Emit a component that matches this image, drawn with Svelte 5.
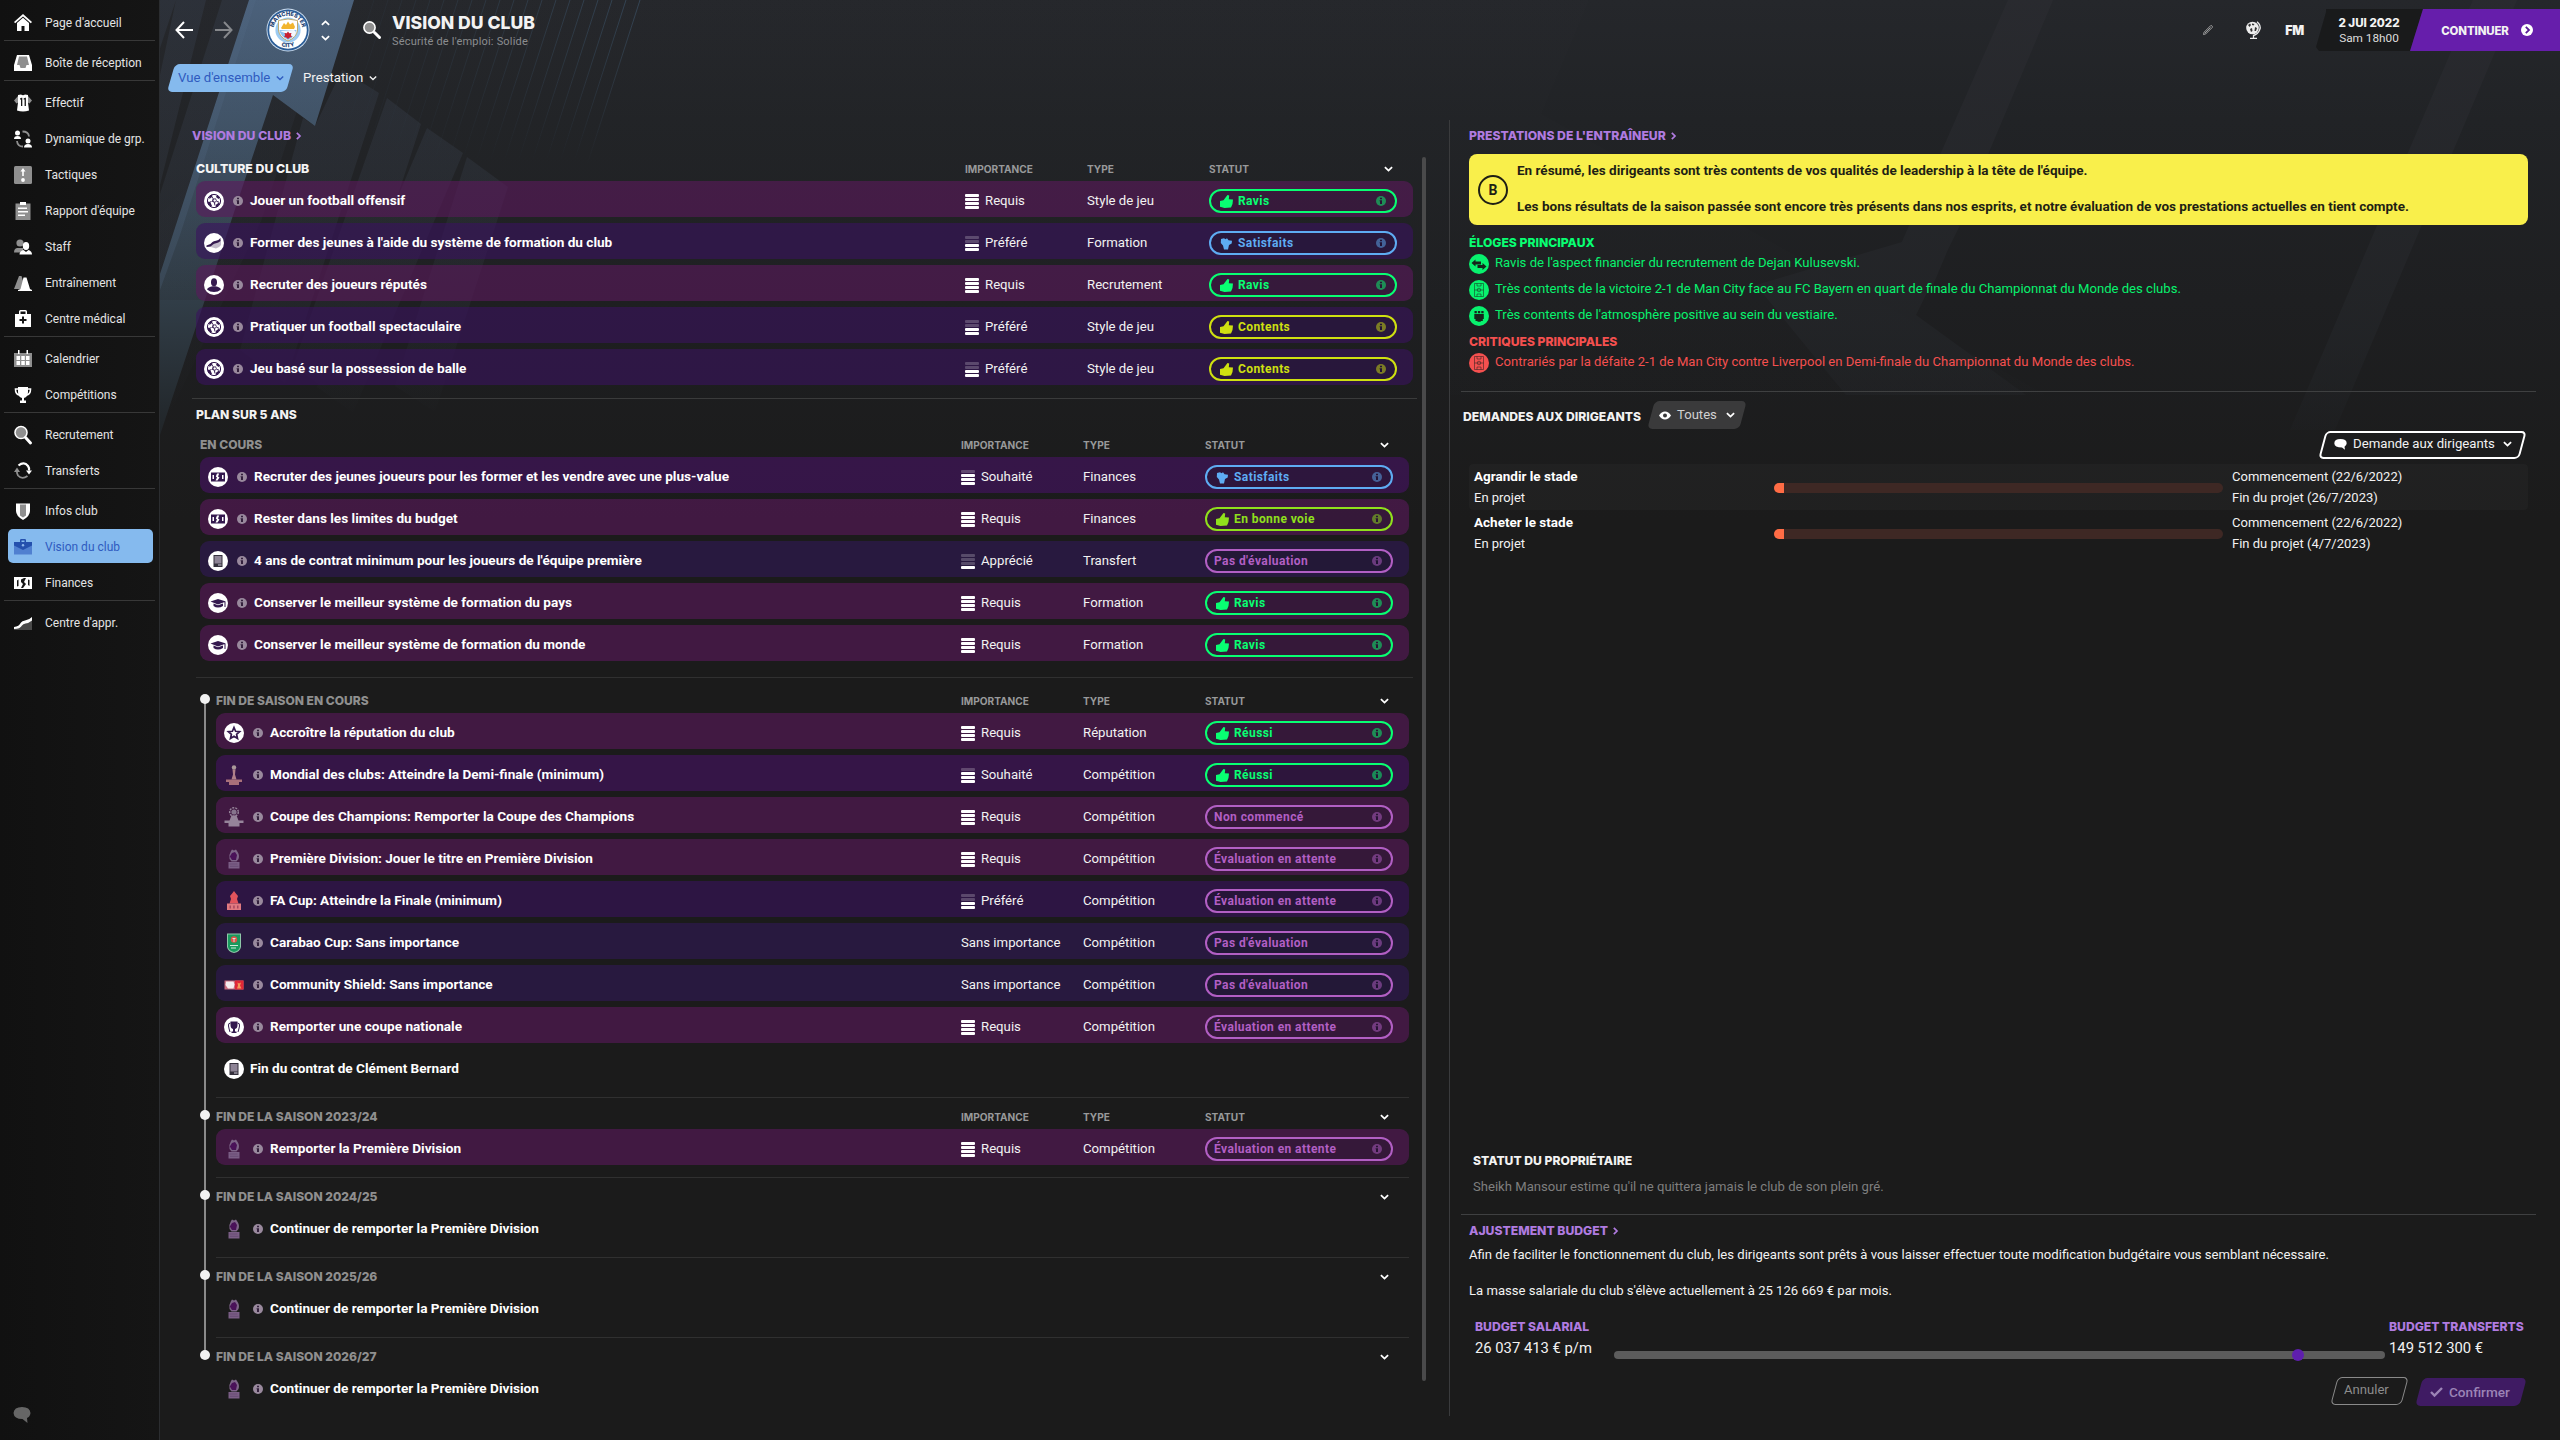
<script>
  const nav = [
    [['home', "Page d'accueil"]],
    [['inbox', 'Boîte de réception']],
    [
      ['shirt', 'Effectif'], ['dynamics', 'Dynamique de grp.'], ['tactics', 'Tactiques'], ['report', "Rapport d'équipe"],
      ['staff', 'Staff'], ['cones', 'Entraînement'], ['medical', 'Centre médical']
    ],
    [['calendar', 'Calendrier'], ['trophy', 'Compétitions']],
    [['search', 'Recrutement'], ['transfer', 'Transferts']],
    [['shield', 'Infos club'], ['case', 'Vision du club', true], ['money', 'Finances']],
    [['growth', "Centre d'appr."]]
  ];

  const levels = { 'Requis': 4, 'Souhaité': 3, 'Préféré': 2, 'Apprécié': 1, 'Sans importance': 0 };
  const tones = {
    'Ravis': ['green', 'up'], 'Réussi': ['green', 'up'], 'Satisfaits': ['blue', 'side'],
    'Contents': ['lemon', 'up'], 'En bonne voie': ['lime', 'up']
  };
  const culture = [
    ['ball', 'Jouer un football offensif', 'Requis', 'Style de jeu', 'Ravis'],
    ['curve', "Former des jeunes à l'aide du système de formation du club", 'Préféré', 'Formation', 'Satisfaits'],
    ['person', 'Recruter des joueurs réputés', 'Requis', 'Recrutement', 'Ravis'],
    ['ball', 'Pratiquer un football spectaculaire', 'Préféré', 'Style de jeu', 'Contents'],
    ['ball', 'Jeu basé sur la possession de balle', 'Préféré', 'Style de jeu', 'Contents']
  ];
  const current = [
    ['cash', 'Recruter des jeunes joueurs pour les former et les vendre avec une plus-value', 'Souhaité', 'Finances', 'Satisfaits'],
    ['cash', 'Rester dans les limites du budget', 'Requis', 'Finances', 'En bonne voie'],
    ['contract', "4 ans de contrat minimum pour les joueurs de l'équipe première", 'Apprécié', 'Transfert', "Pas d'évaluation"],
    ['grad', 'Conserver le meilleur système de formation du pays', 'Requis', 'Formation', 'Ravis'],
    ['grad', 'Conserver le meilleur système de formation du monde', 'Requis', 'Formation', 'Ravis']
  ];
  const seasons = [
    {
      title: 'FIN DE SAISON EN COURS', cols: true, rows: [
        ['star', 'Accroître la réputation du club', 'Requis', 'Réputation', 'Réussi'],
        ['worldcup', 'Mondial des clubs: Atteindre la Demi-finale (minimum)', 'Souhaité', 'Compétition', 'Réussi'],
        ['champions', 'Coupe des Champions: Remporter la Coupe des Champions', 'Requis', 'Compétition', 'Non commencé'],
        ['league', 'Première Division: Jouer le titre en Première Division', 'Requis', 'Compétition', 'Évaluation en attente'],
        ['facup', 'FA Cup: Atteindre la Finale (minimum)', 'Préféré', 'Compétition', 'Évaluation en attente'],
        ['carabao', 'Carabao Cup: Sans importance', 'Sans importance', 'Compétition', "Pas d'évaluation"],
        ['community', 'Community Shield: Sans importance', 'Sans importance', 'Compétition', "Pas d'évaluation"],
        ['cup', 'Remporter une coupe nationale', 'Requis', 'Compétition', 'Évaluation en attente'],
        ['contract', 'Fin du contrat de Clément Bernard']
      ]
    },
    { title: 'FIN DE LA SAISON 2023/24', cols: true, rows: [['league', 'Remporter la Première Division', 'Requis', 'Compétition', 'Évaluation en attente']] },
    { title: 'FIN DE LA SAISON 2024/25', rows: [['league', 'Continuer de remporter la Première Division']] },
    { title: 'FIN DE LA SAISON 2025/26', rows: [['league', 'Continuer de remporter la Première Division']] },
    { title: 'FIN DE LA SAISON 2026/27', rows: [['league', 'Continuer de remporter la Première Division']] }
  ];
  const praise = [
    ['swap', "Ravis de l'aspect financier du recrutement de Dejan Kulusevski."],
    ['pitch', 'Très contents de la victoire 2-1 de Man City face au FC Bayern en quart de finale du Championnat du Monde des clubs.'],
    ['people', "Très contents de l'atmosphère positive au sein du vestiaire."]
  ];
  const critics = [['pitch', 'Contrariés par la défaite 2-1 de Man City contre Liverpool en Demi-finale du Championnat du Monde des clubs.']];
  const projects = [
    ['Agrandir le stade', '26/7/2023'],
    ['Acheter le stade', '4/7/2023']
  ];
  const budget = 88.7;
  const rays = Array.from({ length: 20 }, (_, i) => 374 + i * 14);
</script>

{#snippet chev(cls)}
  <svg class="chev {cls}" viewBox="0 0 10 6"><path d="M1 1l4 3.8L9 1" /></svg>
{/snippet}

{#snippet info()}
  <svg class="info" viewBox="0 0 10 10"><circle cx="5" cy="5" r="5" /><path d="M4 1.8h2v1.5H4zM3.6 4.2H6V8H4V5.2h-.4z" /></svg>
{/snippet}

{#snippet navIcon(k)}
  <svg class="nav-icon" viewBox="0 0 18 18">
    {#if k === 'home'}
      <path class="w" d="M9 0l9 8-1.2 1.3L9 2.4 1.2 9.3 0 8zM3 9l6-5.3L15 9v8h-4.5v-5h-3v5H3z" />
    {:else if k === 'inbox'}
      <path class="w" d="M3 1h12l3 10v6H0v-6z" /><path class="g" d="M5 2.6h8l2 8.4h-2.500l-1 3H6.500l-1-3H3z" />
    {:else if k === 'shirt'}
      <path class="g" d="M4 2L0 6.500l2.500 3L5 8zM14 2l4 4.500-2.500 3L13 8z" /><path class="w" d="M4 1l3-.5q2 1.500 4 0l3 .5v7.500l1 8q-6 2-12 0l1-8z" />
      <path class="k" d="M6 4.500l1.500-.7h.8V12H7V5.500H6zM9.600 4.500l1.500-.7h.8V12h-1.300V5.500h-1z" />
    {:else if k === 'dynamics'}
      <circle class="w" cx="3.500" cy="3" r="2.500" /><path class="w" d="M0 9q0-3 3.500-3T7 9z" />
      <circle class="w" cx="14" cy="11" r="2.500" /><path class="w" d="M10 17.500q0-3.500 4-3.500t4 3.500z" />
      <path class="gs" d="M8.500 1.500q6 0 6.500 5M9 16.500q-5.500 0-6-5.500" />
    {:else if k === 'tactics'}
      <rect class="g" width="18" height="18" rx="1.500" /><path class="w" d="M9 2l2.500 3.500h-1.700V10H8.200V5.500H6.500z" /><circle class="w" cx="9" cy="14" r="1.900" />
    {:else if k === 'report'}
      <path class="g" d="M1.500 1.500h15V18h-15z" /><path class="w" d="M6 0h6v3H6zM4 5.500h9V7H4zM4 9h10v1.500H4zM4 12.500h7V14H4z" />
    {:else if k === 'staff'}
      <g class="g"><circle cx="6" cy="5" r="3.600" /><path d="M0 14.500q0-4 3-4.500h6v4.500z" /></g>
      <g class="w"><ellipse cx="12" cy="8" rx="3.200" ry="4" /><path d="M5.500 16.500q0-3.500 4-4.500l2.500 2 2.500-2q3.500 1 3.500 4.500z" /></g>
    {:else if k === 'cones'}
      <path class="g" d="M5 2h2.500L11 13v2H0z" /><path class="w" d="M9.500 3.500h3L16 15l2 1v1H4v-1l2.500-1z" />
    {:else if k === 'medical'}
      <path class="w" fill-rule="evenodd" d="M5 4V1.500Q5 0 6.500 0h5Q13 0 13 1.500V4h4v13H1V4zM6.500 4h5V1.600h-5z" /><path class="k" d="M8 6.500h2V9h2.500v2H10v2.500H8V11H5.500V9H8z" />
    {:else if k === 'calendar'}
      <path class="g" d="M0 3h18v14H0z" /><path class="w" d="M4 0h1.500v4H4zM12.500 0H14v4h-1.500zM2.500 6h3.500v4H2.500zM7.300 6h3.500v4H7.300zM12 6h3.500v4H12zM2.500 11h3.500v4H2.500zM7.300 11h3.500v4H7.300zM12 11h3.500v4H12z" />
    {:else if k === 'trophy'}
      <path class="w" d="M4 1h10v5q0 5-4 6v2.500h2V17H6v-2.500h2V12Q4 11 4 6z" /><path class="ws" d="M4 3H1.500q0 5 3.500 6M14 3h2.500q0 5-3.500 6" />
    {:else if k === 'search'}
      <circle class="g" cx="7" cy="6.500" r="5.500" /><circle class="ws" cx="7" cy="6.500" r="6" /><path class="thick" d="M11.500 11.500l5 5.500" />
    {:else if k === 'transfer'}
      <path class="ws b" d="M4.500 3.500Q10-1 14 4q1.500 2 1 4.500" /><path class="w" d="M12 8.500h6l-3 4z" /><path class="gs" d="M13.500 14Q8 18 4 13.500 2.500 11 3 9" /><path class="g" d="M0 10l3-4.500L6 10z" />
    {:else if k === 'shield'}
      <path class="w" d="M2 1.500h14V9q0 5-7 9-7-4-7-9z" /><path class="g" d="M6 2.500h6v11l-3 2-3-2z" />
    {:else if k === 'case'}
      <path class="l" d="M0 7h18v9.500H0z" /><path class="d" fill-rule="evenodd" d="M6 4V2.200Q6 1 7.200 1h3.600Q12 1 12 2.200V4h6v3.500L9 12 0 7.500V4zM7.500 4h3V2.500h-3z" /><circle class="l2" cx="9" cy="7.300" r="1.200" />
    {:else if k === 'money'}
      <path class="w" d="M0 3h18v12H0z" /><path class="k" d="M7 5.500l3-1.500h2l-2 4 2 2-3 4H7l2-4-2-2zM3 6.500l1.500-1V12L3 12.500zM14 5.500l1.500.5v6l-1.500-1z" />
    {:else if k === 'growth'}
      <path class="g fade" d="M0 13.500q5 0 8-5l10-3V16H0z" /><path class="w" d="M0 13Q5 12.500 7 8.500 8 7 11 6.500q4-.5 7-3.500v3.500q-3 2.500-6.500 3-2.500.5-3.500 2Q6 15 0 15z" />
    {/if}
  </svg>
{/snippet}

{#snippet rowIcon(k)}
  <svg class="row-icon" viewBox="0 0 20 20">
    {#if ['ball', 'curve', 'person', 'cash', 'contract', 'grad', 'star', 'cup'].includes(k)}
      <circle cx="10" cy="10" r="10" fill="#fff" />
    {/if}
    {#if k === 'ball'}
      <circle cx="10" cy="10" r="6.600" fill="none" stroke="#34194f" stroke-width="1" />
      <path d="M8.700 7.400l3.300.1.900 2.700-2.300 1.900-2.700-1.700zM5 5.500l3-2 .5 2L5.500 8zM13 3.800l3 2.700-1.500 1.500L12 6zM4 10.500l2.500 1L8 15l-1 1-3-3zM12 13.800l3-2.300 1 .5-2 3.500-2.500 1z" fill="#34194f" /><path d="M8 6l1 1.500M13 10.500l2 .7M10.500 12l.5 2.500M7.500 10.500l-2.500 1" stroke="#34194f" /><circle cx="10.700" cy="9.500" r="1.200" fill="#fff" />
    {:else if k === 'curve'}
      <path d="M3 13q4 0 6.500-3.500L17 7v5q-2 3-5 3.500z" fill="#34194f" opacity=".3" /><path d="M2.500 12.500q4-.5 6-3.500 1-1 3.500-1.200 2.500-.3 4.500-2.800v3q-2 2-4.500 2.200-2 .3-3 1.300-2 2.500-6.500 2.500z" fill="#34194f" />
    {:else if k === 'person'}
      <ellipse cx="10" cy="7.300" rx="3" ry="4" fill="#34194f" /><path d="M3 14.500q1-2.500 5.500-3.200h3q4.500.7 5.500 3.200-3 2.500-7 2.500t-7-2.500z" fill="#34194f" />
    {:else if k === 'cash'}
      <path d="M3 5.500h14v9H3z" fill="#34194f" /><path d="M9 6.500h2.200L10 9.500l1.500 1-2 3H7.500l1.500-3-1.200-1zM4.500 8h1.500v4H4.500zM14 8h1.500v4H14z" fill="#fff" />
    {:else if k === 'contract'}
      <rect x="5.500" y="4" width="9" height="12" fill="#34303c" /><path d="M6.500 5h7v7.500h-7z" fill="#8e8496" /><path d="M10 13.500h3.500v1H10z" fill="#cfc8d6" />
    {:else if k === 'grad'}
      <path d="M2.500 8.500L10 6l8 2.500-8 3zM5.500 10.500L10 12.300l5-1.800v2.500q-2.500 1.500-5 1.500T5.500 13zM16.500 9h1v5h-1z" fill="#34194f" />
    {:else if k === 'star'}
      <path d="M10 4.500l1.600 3.800 4 .3-3 2.700.9 4.200-3.500-2.200-3.500 2.200.9-4.200-3-2.700 4-.3z" fill="none" stroke="#34194f" stroke-width="1.700" />
    {:else if k === 'cup'}
      <path d="M6.500 4.500h7V8q0 3.500-2.500 4v2.500h1.500V16h-5v-1.500H9V12Q6.500 11.500 6.500 8z" fill="#34194f" /><path d="M6.500 6Q4 6 4.500 9t1.500 6M13.500 6q2.500 0 2 3T14 15" fill="none" stroke="#34194f" />
    {:else if k === 'worldcup'}
      <circle cx="10" cy="2.500" r="2.200" fill="#a99" /><path d="M8.500 4.500h3l-.5 5 1.500 5h-5l1.500-5z" fill="#b0808a" /><path d="M2 14.500h16v2.500H2zM5 17h10v3H5z" fill="#a8707a" />
    {:else if k === 'champions'}
      <circle cx="10" cy="5" r="4.300" fill="none" stroke="#96849a" stroke-width="1.500" stroke-dasharray="2 1" /><circle cx="10" cy="5" r="2.600" fill="#86748c" /><path d="M7.500 8.500h5l2 5h-9zM.5 13.500h19V16H.5zM4.500 16h11v3.500h-11z" fill="#96849a" />
    {:else if k === 'league'}
      <path d="M7 2l1-1.500 2 1 2-1 1 1.500q3 4 1.500 8l-2 2.500h-5L5.500 10Q4.500 6 7 2z" fill="#7d6488" /><path d="M8 4l3-1 2 3-1 5H8L5.800 7.500z" fill="#4a1259" /><path d="M4.500 13h11v6.500h-11z" fill="#7b5f86" /><path d="M5.500 15h8M6 17.300h8.500" stroke="#62456f" stroke-width=".7" />
    {:else if k === 'facup'}
      <path d="M10 0l1.500 2L14 5l-1 3 1.500 4.500h-9L7 8 6 5l2.500-3z" fill="#e2545c" /><path d="M3 12.500h14V19H3z" fill="#e07a80" /><path d="M5.500 14.500h1.500v3H5.500zM9.200 14.500h1.500v3H9.200zM13 14.500h1.500v3H13z" fill="#a8485f" />
    {:else if k === 'carabao'}
      <path d="M3 .5h14V14q-1 5-7 6-6-1-7-6z" fill="#8fc7a9" /><path d="M4 1.500h12V14q-1 4-6 5-5-1-6-5z" fill="#199a5e" /><circle cx="10" cy="6.500" r="3.200" fill="#e05248" /><path d="M8.500 5h3v1h-1v3h-1V6h-1zM6 12h8v1H6zM7 14.500h5v1H7z" fill="#cfeadb" />
    {:else if k === 'community'}
      <path d="M.5 5.500h19v9H.5z" fill="#c96c7e" /><path d="M2 6.500h7.500l1 3-1 4H4L1.500 10z" fill="#f4ecee" /><path d="M11 5.500h8.500v9H11z" fill="#e02736" /><path d="M13.500 7.500l1.500 1 2-1-1 3 1.500 3H13l1-3z" fill="#f29a5a" />
    {/if}
  </svg>
{/snippet}

{#snippet heads(title, cols)}
  <div class="heads">
    <span class="name">{title}</span>
    {#if cols}<span class="col">IMPORTANCE</span><span class="col">TYPE</span>{/if}
    <span class="last">{#if cols}STATUT{/if}{@render chev('bold')}</span>
  </div>
{/snippet}

{#snippet row([icon, title, imp, type, status])}
  <div class="row {imp ? 'lv' + levels[imp] : ''}">
    {@render rowIcon(icon)}
    {#if imp || icon === 'league'}{@render info()}{/if}
    <span class="title" class:tight={!imp && icon !== 'league'}>{title}</span>
    {#if imp}
      <span class="col">
        {#if levels[imp]}
          <span class="bars">{#each [4, 3, 2, 1] as n}<i class:off={n > levels[imp]}></i>{/each}</span>
        {/if}
        {imp}
      </span>
      <span class="col">{type}</span>
      <span class="pill {tones[status]?.[0] ?? 'violet'}">
        {#if tones[status]?.[1] === 'up'}
          <svg class="thumb" viewBox="0 0 13 13"><path d="M0 6l3.500-.8L7.500 0 9.200.5 8.800 4.300l4.200.3-.5 4.500-1.500 3.400-6.500.5L0 11.800z" /></svg>
        {:else if tones[status]}
          <svg class="thumb" viewBox="0 0 13 13"><path d="M1 2l3-.8 1.500 1 1.500-1 1.500 2 3.500.6-.3 2.700-2.700 1.500L8 12.500H4L3 8.500.8 6z" /></svg>
        {/if}
        <b>{status}</b>{@render info()}
      </span>
    {/if}
  </div>
{/snippet}

{#snippet note([icon, text])}
  <div class="note">
    <svg viewBox="0 0 20 20">
      <circle cx="10" cy="10" r="10" />
      {#if icon === 'swap'}
        <path class="n" d="M2.500 9L6.500 5.500V7.500h5.500v3H6.500v2zM17.500 12.500L13.500 16v-2H8.500v-3h5V9z" />
      {:else if icon === 'pitch'}
        <path class="ln" d="M5.500 3.500h9v13h-9zM5.500 10h9M8 3.500v2.500h4V3.500M8 16.500V14h4v2.500" /><circle class="ln" cx="10" cy="10" r="1.800" />
      {:else}
        <path class="n" d="M5.500 5h2.300v2.300H5.500zM8.900 5h2.300v2.300H8.900zM12.300 5h2.300v2.300h-2.300zM5.300 8h9.500v5h-1v2h-2v.8H8.500V15h-2v-2H5.300z" />
      {/if}
    </svg>
    <span>{text}</span>
  </div>
{/snippet}

<div class="app">
  <svg class="backdrop" viewBox="0 0 2560 1440" aria-hidden="true">
    <defs>
      <linearGradient id="band" x1="0" y1="0" x2="0" y2="440" gradientUnits="userSpaceOnUse">
        <stop offset="0" stop-color="#516b89" /><stop offset=".3" stop-color="#455a70" /><stop offset=".65" stop-color="#33404b" /><stop offset="1" stop-color="#202427" />
      </linearGradient>
      <linearGradient id="dim" x1="0" y1="0" x2="0" y2="420" gradientUnits="userSpaceOnUse">
        <stop offset="0" stop-color="#2d323b" /><stop offset=".4" stop-color="#292d33" /><stop offset="1" stop-color="#292d33" stop-opacity="0" />
      </linearGradient>
      <linearGradient id="far" x1="0" y1="0" x2="0" y2="470" gradientUnits="userSpaceOnUse">
        <stop offset="0" stop-color="#2a2b30" /><stop offset=".7" stop-color="#232528" /><stop offset="1" stop-color="#232528" stop-opacity="0" />
      </linearGradient>
      <linearGradient id="ray" x1="0" y1="0" x2="0" y2="165" gradientUnits="userSpaceOnUse">
        <stop offset="0" stop-color="#36495b" /><stop offset="1" stop-color="#36495b" stop-opacity="0" />
      </linearGradient>
    </defs>
    <g fill="url(#dim)">
      <path d="M160 0h16l-16 48zM176 0h30L160 185V75zM222 0h27L160 274v-80z" />
      <path d="M273 95l24 16-36 110L160 435V215z" opacity=".5" />
      <path d="M303 118l12 8 27-56 37 23-94 290-45-33z" />
      <path d="M387 98l34 26-88 270-40-28zM427 128l36 25-110 260-36-26zM467 157l41 30-73 225-40-26z" />
    </g>
    <path d="M249 0h105l-39 126-42-31L160 435V274z" fill="url(#band)" />
    <path d="M249 0h7L180 235l-20 55v-16z" fill="#5a7697" opacity=".25" />
    {#each rays as x, i}
      <path d="M{x} 0l-53 165" stroke="url(#ray)" opacity={0.15 + i * 0.045} />
    {/each}
    <path d="M160 0h1429l-48 114 505 281H1449V300H160z" fill="url(#far)" opacity=".16" />
    <path d="M2008 0h45l-120 285h-50zM1960 225l-44 90 110 80h-180l-90-110zM2473 0h44l-182 430h-45z" fill="url(#far)" opacity=".8" />
  </svg>

  <aside>
    {#each nav as group, i}
      {#if i}<hr />{/if}
      {#each group as [icon, label, active]}
        <a class="nav" class:active>{@render navIcon(icon)}<span>{label}</span></a>
      {/each}
    {/each}
    <svg class="chat" viewBox="0 0 18 18"><path d="M9 1q8 0 8.500 6-.5 4-3.500 5l.5 5-5-4Q1 13 .500 7 1 1 9 1z" /></svg>
  </aside>

  <main>
    <header>
      <svg class="arrow" viewBox="0 0 18 18"><path d="M9 1L1.500 9 9 17M1.500 9H18" /></svg>
      <svg class="arrow next" viewBox="0 0 18 18"><path d="M9 1l7.500 8L9 17M16.500 9H0" /></svg>
      <svg class="crest" viewBox="0 0 44 44">
        <defs><path id="arc" d="M7.500 22a14.500 14.500 0 0 1 29 0" /><path id="arc2" d="M4.800 22a17.200 17.200 0 0 0 34.400 0" /></defs>
        <circle cx="22" cy="22" r="21.500" fill="#cfdff0" /><circle cx="22" cy="22" r="20.600" fill="#2a5c96" /><circle cx="22" cy="22" r="18.800" fill="#fff" />
        <circle cx="22" cy="22" r="12.600" fill="#9ccbf2" />
        <path d="M12.500 12.500q9.500-3 19 0V22q-.5 7-9.500 11-9-4-9.500-11z" fill="#fff" stroke="#b99a4c" stroke-width=".8" />
        <path d="M15 20l3-5 2 2 2-3.500 2 3 3-2 2 4.500-1 2H16z" fill="#f2b52e" />
        <path d="M13.500 22h17q-.5 6-8.500 10-8-4-8.500-10z" fill="#8cc3f0" /><path d="M14 23l14 6 2-5-2-2z" fill="#f4f8fc" />
        <path d="M22 23.500l1.300 1.800 2.200-.3-.6 2.100 1 2-2.200.3L22 31l-1.700-1.600-2.200-.3 1-2-.6-2.100 2.200.3z" fill="#c8202f" />
        <text class="ct"><textPath href="#arc" startOffset="50%">MANCHESTER</textPath></text>
        <text class="ct"><textPath href="#arc2" startOffset="50%">CITY</textPath></text>
      </svg>
      <span class="updown">{@render chev('bold flip')}{@render chev('bold')}</span>
      <svg class="glass" viewBox="0 0 18 18"><circle class="g" cx="6.500" cy="6.500" r="5.500" /><circle class="ws" cx="6.500" cy="6.500" r="5.600" /><path class="thick" d="M11.500 11.500l5 5" /></svg>
      <div class="titles"><h1>VISION DU CLUB</h1><p>Sécurité de l'emploi: Solide</p></div>

      <svg class="pencil" viewBox="0 0 10 10"><path d="M.5 9.500l.6-2.300L7.600.7q.8-.4 1.400.2t.3 1.500L2.800 8.900zM2 8l5.500-5.500" /></svg>
      <svg class="globe" viewBox="0 0 16 18"><circle cx="7.500" cy="7" r="6.300" /><path class="c" d="M12 .8q4.500 3.500 2.700 8T8.500 14.500V17M5 17.300h7" /><path class="o" d="M3 4l2-1.500L6 4 4.500 6zM7 2.500l2.500.5-1 1.500-1.500-.5zM5 8l2-1 .5 3-1.500 1zM10 6l2 1-1 3H9.500z" /></svg>
      <span class="fm">FM</span>
      <div class="date"><b>2 JUI 2022</b><span>Sam 18h00</span></div>
      <button class="continue"><span>CONTINUER</span><svg viewBox="0 0 12 12"><circle cx="6" cy="6" r="6" /><path d="M4.800 2.800L8 6 4.800 9.200" /></svg></button>
    </header>

    <nav>
      <a class="tab on"><span>Vue d'ensemble</span>{@render chev('')}</a>
      <a class="tab"><span>Prestation</span>{@render chev('')}</a>
    </nav>

    <div class="columns">
      <section class="left">
        <h2 class="link">VISION DU CLUB<svg viewBox="0 0 5 8"><path d="M.8.8L4 4 .8 7.200" /></svg></h2>
        <div class="scroller">
          <div class="content">
            <div class="culture">
              {@render heads('CULTURE DU CLUB', true)}
              <div class="rows">{#each culture as r}{@render row(r)}{/each}</div>
            </div>
            <div class="plan">
              <h3>PLAN SUR 5 ANS</h3>
              <div class="current">
                {@render heads('EN COURS', true)}
                <div class="rows">{#each current as r}{@render row(r)}{/each}</div>
              </div>
            </div>
            <div class="timeline">
              {#each seasons as s}
                <div class="season">
                  {@render heads(s.title, s.cols)}
                  <div class="rows">{#each s.rows as r}{@render row(r)}{/each}</div>
                </div>
              {/each}
            </div>
          </div>
          <div class="bar"></div>
        </div>
      </section>

      <section class="right">
        <h2 class="link">PRESTATIONS DE L'ENTRAÎNEUR<svg viewBox="0 0 5 8"><path d="M.8.8L4 4 .8 7.200" /></svg></h2>
        <div class="summary">
          <span class="grade">B</span>
          <div>
            <p>En résumé, les dirigeants sont très contents de vos qualités de leadership à la tête de l'équipe.</p>
            <p>Les bons résultats de la saison passée sont encore très présents dans nos esprits, et notre évaluation de vos prestations actuelles en tient compte.</p>
          </div>
        </div>
        <div class="notes good"><h3>ÉLOGES PRINCIPAUX</h3>{#each praise as n}{@render note(n)}{/each}</div>
        <div class="notes bad"><h3>CRITIQUES PRINCIPALES</h3>{#each critics as n}{@render note(n)}{/each}</div>
        <hr />
        <div class="demands">
          <h3>DEMANDES AUX DIRIGEANTS</h3>
          <button class="skew all"><svg class="eye" viewBox="0 0 12 9"><path d="M0 4.500Q2.500.5 6 .5t6 4Q9.500 8.500 6 8.500T0 4.500z" /><circle cx="6" cy="4.500" r="2" /></svg><span>Toutes</span>{@render chev('bold')}</button>
        </div>
        <button class="skew ask"><svg class="bubble" viewBox="0 0 13 12"><path d="M6.500 1q6 0 6.200 4.200-.2 2.300-2.200 3.600l.5 3L8 9.500Q.5 9.500.300 5.200.500 1 6.500 1z" /></svg><span>Demande aux dirigeants</span>{@render chev('bold')}</button>
        <div class="projects">
          {#each projects as [name, end]}
            <div class="project">
              <div class="what"><b>{name}</b><span>En projet</span></div>
              <div class="track"><i></i></div>
              <div><span>Commencement (22/6/2022)</span><span>Fin du projet ({end})</span></div>
            </div>
          {/each}
        </div>
        <div class="owner">
          <h3>STATUT DU PROPRIÉTAIRE</h3>
          <p>Sheikh Mansour estime qu'il ne quittera jamais le club de son plein gré.</p>
        </div>
        <hr />
        <h2 class="link adj">AJUSTEMENT BUDGET<svg viewBox="0 0 5 8"><path d="M.8.8L4 4 .8 7.200" /></svg></h2>
        <div class="text">
          <p>Afin de faciliter le fonctionnement du club, les dirigeants sont prêts à vous laisser effectuer toute modification budgétaire vous semblant nécessaire.</p>
          <p>La masse salariale du club s'élève actuellement à 25 126 669 € par mois.</p>
        </div>
        <div class="budget">
          <div class="wage"><h3>BUDGET SALARIAL</h3><span>26 037 413 € p/m</span></div>
          <div class="slider"><i style="left: {budget}%"></i></div>
          <div class="fees"><h3>BUDGET TRANSFERTS</h3><span>149 512 300 €</span></div>
        </div>
        <div class="actions">
          <button class="skew cancel"><span>Annuler</span></button>
          <button class="skew confirm"><svg viewBox="0 0 13 10"><path d="M1 5l3.500 3.500L12 1" /></svg><span>Confirmer</span></button>
        </div>
      </section>
    </div>
  </main>
</div>

<style>
  :global(body) { background: #1b1b1b; }
  * { box-sizing: border-box; margin: 0; padding: 0; }
  svg { display: block; flex: none; overflow: visible; }
  button { font: inherit; color: inherit; background: none; border: 0; }
  .app {
    position: relative; display: flex; width: 2560px; height: 1440px; overflow: hidden; color: #f2f2f2;
    font: 400 13.1px/20px Roboto, sans-serif; white-space: nowrap;
    background: linear-gradient(#25272b 0, #212326 120px, #1e1f21 300px, #1b1b1b 520px);
  }
  .backdrop { position: absolute; left: 0; top: 0; width: 2560px; height: 1440px; }
  h1, h2, h3 { font-family: Inter, sans-serif; font-weight: 800; }
  h3 { font-size: 12.15px; line-height: 16px; }
  hr { border: 0; }

  aside { position: relative; display: flex; flex: none; flex-direction: column; width: 160px; padding: 4px 4px 0; background: linear-gradient(90deg, #111, #151515); border-right: 1px solid #2b2d30; }
  aside hr { height: 4px; border-top: 1px solid #383838; }
  .nav { display: flex; align-items: center; gap: 13px; height: 34px; margin: 1px 2px 1px 4px; padding: 2px 0 0 6px; font-size: 12px; color: #e4e4e4; }
  .nav span { line-height: 18px; }
  .active { background: #85baee; color: #2f5bc0; border-radius: 5px; }
  .nav-icon { width: 18px; height: 18px; }
  .w { fill: #fff; } .g { fill: #8f8f8f; } .k { fill: #161616; } .d { fill: #2450ad; } .l { fill: #5080d0; } .l2 { fill: #8fb8ee; }
  .ws { fill: none; stroke: #fff; stroke-width: 1.6; } .gs { fill: none; stroke: #8f8f8f; stroke-width: 1.8; }
  .b { stroke-width: 2.2; }
  .thick { fill: none; stroke: #fff; stroke-width: 3; stroke-linecap: round; }
  .fade { opacity: .45; }
  .chat { width: 18px; height: 18px; margin: auto 0 16px 9px; fill: #666; }

  main { position: relative; display: flex; flex-direction: column; flex: 1; min-width: 0; }
  header { display: flex; align-items: center; height: 60px; padding-left: 15px; }
  .arrow { width: 18px; height: 18px; fill: none; stroke: #fff; stroke-width: 2; }
  .next { margin-left: 22px; stroke: #86888c; }
  .crest { width: 44px; height: 44px; margin-left: 33px; }
  .ct { font: 800 5.6px Inter, sans-serif; fill: #1c3f73; text-anchor: middle; }
  .updown { display: flex; flex-direction: column; gap: 9px; margin-left: 11px; padding-top: 1px; }
  .glass { width: 18px; height: 18px; margin-left: 33px; }
  .titles { margin-left: 11px; padding-top: 2px; }
  h1 { font-size: 17.6px; line-height: 20px; }
  .titles p { font-size: 11px; line-height: 17px; letter-spacing: .19px; color: #8b8d8f; }
  .pencil { width: 10px; height: 10px; margin-left: auto; fill: none; stroke: #aaa; stroke-width: .9; }
  .globe { width: 16px; height: 18px; margin-left: 32px; fill: #eee; }
  .globe .c { fill: none; stroke: #eee; stroke-width: 1.3; } .globe .o { fill: #333; }
  .fm { font: 900 12.5px/20px Inter, sans-serif; letter-spacing: -.3px; margin: 1px 0 0 24px; }
  .date { display: flex; flex-direction: column; align-items: center; width: 107px; height: 42px; margin-left: 12px; padding: 6px 1px 0 0; line-height: 15px; background: #191a1b; clip-path: polygon(10px 0, 100% 0, 94px 100%, 3px 100%, 0 38px, 10px 3px); }
  .date b { font: 800 11.6px/16px Inter, sans-serif; } .date span { font-size: 11.8px; color: #ddd; }
  .continue { display: flex; align-items: center; gap: 10px; width: 150px; height: 42px; margin-left: -13px; padding-left: 29px; background: #661eab; font: 800 11.4px/16px Inter, sans-serif; clip-path: polygon(13px 0, 100% 0, 100% 100%, 0 100%); }
  .continue span { width: 72px; letter-spacing: -.1px; padding-top: 1px; }
  .continue svg { width: 12px; fill: #fff; } .continue path { fill: none; stroke: #5a1b98; stroke-width: 1.8; }
  .chev { width: 8px; height: 6px; fill: none; stroke: currentColor; stroke-width: 1.7; }
  .chev.bold { width: 9px; stroke-width: 2; color: #fff; }
  .flip { transform: scaleY(-1); }

  nav { display: flex; gap: 10px; height: 28px; margin: 4px 0 0 8px; font-size: 13.2px; }
  .tab { position: relative; display: flex; align-items: center; gap: 6px; height: 28px; padding-bottom: 1px; }
  .tab.on { width: 125px; padding-left: 10px; color: #2f5bbf; z-index: 0; }
  .tab.on::before { content: ''; position: absolute; inset: 0 3px; z-index: -1; background: #85baee; border-radius: 5px; transform: skewX(-16deg); }

  .columns { display: flex; height: 1296px; margin-top: 28px; }
  .left { flex: none; width: 1290px; border-right: 1px solid #3a3b3d; }
  .link { display: flex; align-items: center; gap: 5px; flex: none; height: 32px; color: #b07be0; font-size: 12.2px; line-height: 32px; }
  .link svg { width: 5px; height: 8px; fill: none; stroke: currentColor; stroke-width: 1.7; }
  .left .link { padding-left: 32px; }
  .scroller { display: flex; gap: 5px; margin: 5px 0 0 32px; height: 1259px; overflow: hidden; }
  .content { width: 1225px; }
  .bar { width: 4px; height: 1224px; border-radius: 2px; background: #4a4a4b; }
  .culture { padding: 0 4px 12px; height: 241px; }
  .heads { display: flex; align-items: center; height: 24px; font: 700 10.1px/16px Inter, sans-serif; color: #98999a; }
  .heads .name { flex: 1; font-size: 12.05px; font-weight: 800; color: #8f8f8f; }
  .culture .name { font-size: 12.3px; color: #f4f4f4; }
  .heads .last { display: flex; align-items: center; width: 204px; padding-right: 20px; }
  .heads .chev { margin-left: auto; }
  .col { width: 122px; }
  .rows { display: flex; flex-direction: column; gap: 6px; }
  .row { display: flex; align-items: center; height: 36px; padding: 4px 16px 0 8px; border-radius: 9px; font-size: 13.2px; }
  .row .col { display: flex; align-items: center; gap: 6px; height: 20px; margin-top: -1px; }
  .lv4 { background: rgba(92, 25, 94, .6); }
  .lv3 { background: rgba(72, 19, 102, .6); }
  .lv2 { background: rgba(59, 19, 95, .6); }
  .lv1, .lv0 { background: rgba(50, 25, 89, .6); }
  .row-icon { width: 20px; height: 20px; }
  .info { width: 10px; height: 10px; margin-left: 9px; fill: #99899d; }
  .info path { fill: #33203c; }
  .row > .title { flex: 1; margin: -2px 0 0 7px; font-size: 13.6px; font-weight: 700; color: #fff; }
  .row > .title.tight { margin-left: 6px; }
  .bars { display: flex; flex-direction: column; gap: 1px; width: 14px; margin-top: 2px; }
  .bars i { height: 3px; border-radius: 1px; background: #fff; }
  .bars .off { background: rgba(255, 255, 255, .22); }
  .pill { display: flex; align-items: center; width: 188px; height: 24px; padding: 0 9px 0 7px; border: 2px solid; border-radius: 12px; background: rgba(26, 22, 36, .3); font-size: 12px; letter-spacing: .42px; }
  .pill b { flex: 1; line-height: 20px; }
  .pill .info { fill: currentColor; opacity: .5; }
  .pill .info path { fill: #1c1030; }
  .thumb { width: 13px; height: 13px; margin: 0 5px 0 2px; fill: currentColor; }
  .green { color: #08ff72; } .blue { color: #5eacf3; } .lemon { color: #cfe010; } .lime { color: #90e01c; } .violet { color: #b25fc4; }

  .plan { border-top: 1px solid #3a3b3b; padding-bottom: 16px; }
  .plan > h3 { padding: 8px 0 10px 4px; height: 34px; }
  .current { padding: 0 8px; }
  .timeline { position: relative; margin: 0 4px; padding: 11px 4px 0 20px; border-top: 1px solid #303030; }
  .timeline::before { content: ''; position: absolute; left: 8px; top: 22px; width: 2px; height: 656px; background: #8a8a8a; }
  .season { position: relative; }
  .season::before { content: ''; position: absolute; left: -16px; top: 5px; width: 10px; height: 10px; border-radius: 50%; background: #f2f2f2; }
  .season + .season { margin-top: 12px; padding-top: 7px; border-top: 1px solid #303030; }
  .season + .season::before { top: 12px; }

  .right { display: flex; flex-direction: column; flex: 1; min-width: 0; padding: 0 24px 0 11px; }
  .right .link { padding-left: 8px; }
  .right > hr { flex: none; height: 1px; background: #3f4041; }
  .summary { display: flex; align-items: center; gap: 9px; flex: none; height: 71px; margin: 2px 8px 0; padding-left: 9px; border-radius: 8px; background: #f9ef4b; color: #1f1f14; font-size: 13.52px; font-weight: 700; line-height: 18px; }
  .summary div { margin-top: -3px; }
  .summary p + p { margin-top: 18px; }
  .grade { width: 30px; height: 30px; border: 2px solid; border-radius: 50%; text-align: center; font: 700 14px/26px Roboto, sans-serif; }
  .notes { padding: 0 8px; }
  .good { color: #08f26e; margin-top: 10px; } .bad { color: #f5504f; margin-top: 5px; }
  .good h3 { color: #08ff72; }
  .note { display: flex; align-items: center; gap: 6px; height: 26px; }
  .note span { margin-top: -3px; }
  .note svg { width: 20px; fill: currentColor; }
  .note .n { fill: #16241b; } .note .ln { fill: none; stroke: #1b1b1b; stroke-width: 1; opacity: .5; }
  .bad { padding-bottom: 15px; }
  .demands { display: flex; flex: none; height: 39px; padding: 9px 0 0 2px; }
  .demands h3 { width: 185px; line-height: 31px; }
  .skew { position: relative; z-index: 0; display: flex; align-items: center; flex: none; height: 28px; }
  .skew::before { content: ''; position: absolute; inset: 0 3px; z-index: -1; border-radius: 5px; transform: skewX(-15deg); }
  .all { width: 98px; gap: 6px; padding-left: 11px; color: #d2d2d2; }
  .all::before { background: #3a3a3b; }
  .eye { width: 12px; fill: #fff; } .eye circle { fill: #3a3a3b; }
  .all .chev { margin-left: 3px; }
  .ask { align-self: flex-end; width: 207px; gap: 6px; margin: 0 10px 0 0; padding: 0 0 2px 15px; font-size: 13.2px; }
  .ask::before { border: 2px solid #fff; }
  .ask .chev { margin-left: 2px; }
  .bubble { width: 13px; fill: #fff; }
  .projects { flex: none; margin: 5px 8px 0; height: 92px; }
  .project { display: flex; align-items: center; height: 46px; padding-left: 5px; border-radius: 4px; line-height: 21px; font-size: 13px; }
  .project:first-child { background: rgba(255, 255, 255, .022); }
  .project span, .project b { display: block; }
  .what { width: 300px; }
  .what b { font-size: 13.5px; color: #fff; }
  .track { width: 449px; height: 10px; margin: 1px 9px 0 0; border-radius: 5px; background: #3e2824; overflow: hidden; }
  .track i { display: block; width: 10px; height: 10px; background: #ff6c45; }
  .owner { flex: none; margin: auto 12px 0; height: 61px; }
  .owner p { margin-top: 8px; color: #7f7f7f; line-height: 20px; }
  .text { flex: none; height: 73px; margin: -1px 8px 0; line-height: 18px; }
  .text p + p { margin-top: 18px; }
  .budget { display: flex; flex: none; height: 40px; padding-left: 14px; }
  .budget h3 { color: #b07be0; }
  .budget span { display: block; margin-top: 3px; font-size: 14.8px; }
  .wage { flex: none; width: 139px; }
  .slider { position: relative; flex: none; width: 771px; height: 8px; margin: 32px 4px 0 0; border-radius: 4px; background: #5c5c5c; }
  .slider i { position: absolute; top: -2px; width: 12px; height: 12px; margin-left: -6px; border-radius: 50%; background: #5f1fae; }
  .actions { display: flex; flex: none; justify-content: flex-end; gap: 8px; height: 39px; margin: 18px 10px 0 0; }
  .cancel { width: 77px; padding: 0 0 2px 13px; color: #8d8d8d; }
  .cancel::before { border: 1.5px solid #8a8a8a; }
  .confirm { width: 110px; gap: 6px; margin-top: 1px; padding: 0 0 1px 14px; color: #9c84b6; font-size: 13.6px; font-weight: 500; }
  .confirm::before { background: #3f1b63; }
  .confirm svg { width: 13px; fill: none; stroke: currentColor; stroke-width: 2.4; }
</style>
